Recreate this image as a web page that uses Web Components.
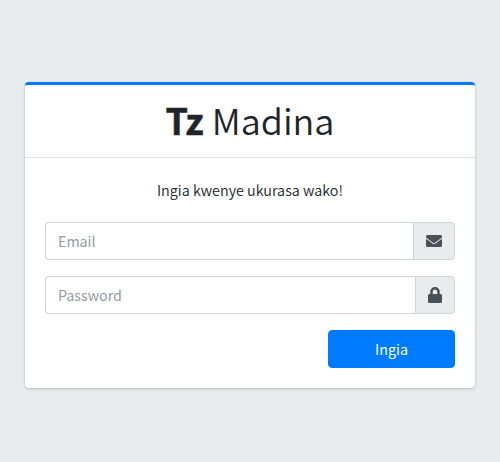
<!DOCTYPE html>
<html lang="sw">
<head>
<meta charset="utf-8">
<title>Tz Madina</title>
<style>
html,body{height:100%}
body{margin:0;background:#e9ecef;color:#212529;font-family:"Noto Sans CJK SC","Open Sans",sans-serif;font-size:14.25px;line-height:24px;overflow:hidden}
</style>
</head>
<body>
<login-page>
  <login-card>
    <brand-title slot="header"><b>Tz</b> <span>Madina</span></brand-title>
    <login-form message="Ingia kwenye ukurasa wako!">
      <input-field type="email" label="Email"><app-icon name="envelope"></app-icon></input-field>
      <input-field type="password" label="Password"><app-icon name="lock"></app-icon></input-field>
      <primary-button slot="action">Ingia</primary-button>
    </login-form>
  </login-card>
</login-page>
<script>
const define = (name, html, setup) => customElements.define(name, class extends HTMLElement {
  constructor() {
    super();
    this.attachShadow({ mode: 'open' }).innerHTML = html;
  }
  connectedCallback() { if (setup) setup(this, this.shadowRoot); }
});

define('login-page', `<style>
:host{display:flex;justify-content:center;align-items:flex-start;box-sizing:border-box;height:100vh;padding-top:82px;background:#e9ecef}
::slotted(login-card){width:90%}
</style><slot></slot>`);

define('login-card', `<style>
:host{display:block;box-sizing:border-box;height:306px;background:#fff;border-top:3px solid #007bff;border-radius:4px;box-shadow:0 0 1px rgba(0,0,0,.125),0 1px 3px rgba(0,0,0,.2)}
header{box-sizing:border-box;height:73px;padding:10px 20px;border-bottom:1px solid rgba(0,0,0,.125);text-align:center}
main{padding:20px}
</style><header><slot name="header"></slot></header><main><slot></slot></main>`);

define('brand-title', `<style>
:host{display:block;font-size:36px;line-height:48px;font-weight:350;white-space:nowrap}
::slotted(b){font-weight:700;-webkit-text-stroke:.5px currentColor}
</style><slot></slot>`);

define('login-form', `<style>
:host{display:block}
p{margin:0 0 20px;font-size:14.4px;font-weight:350;text-align:center;white-space:nowrap}
.fields{display:flex;flex-direction:column;gap:16px}
.actions{display:flex;justify-content:flex-end;margin-top:16px}
</style><p></p><div class="fields"><slot></slot></div><div class="actions"><slot name="action"></slot></div>`,
(el, root) => { root.querySelector('p').textContent = el.getAttribute('message'); });

define('input-field', `<style>
:host{display:flex;height:38px}
input{flex:1;min-width:0;box-sizing:border-box;margin:0;padding:6px 12px;border:1px solid #ced4da;border-right:0;border-radius:4px 0 0 4px;background:#fff;color:#495057;font:inherit;outline:0}
input::placeholder{color:#939ba2;opacity:1}
span{display:flex;align-items:center;box-sizing:border-box;padding:0 12px;border:1px solid #ced4da;border-radius:0 4px 4px 0;background:#e9ecef;color:#495057}
</style><input><span><slot></slot></span>`,
(el, root) => {
  const input = root.querySelector('input');
  input.type = el.getAttribute('type');
  input.placeholder = el.getAttribute('label');
});

const icons = {
  envelope: [512, 'M502.3 190.8c3.9-3.1 9.7-.2 9.7 4.7V400c0 26.5-21.5 48-48 48H48c-26.500 0-48-21.500-48-48V195.600c0-5 5.700-7.800 9.700-4.700 22.400 17.400 52.100 39.500 154.100 113.600 21.100 15.400 56.700 47.800 92.200 47.600 35.700.3 72-32.800 92.300-47.600 102-74.100 131.600-96.300 154-113.700zM256 320c23.200.4 56.600-29.200 73.400-41.400 132.700-96.300 142.800-104.700 173.400-128.700 5.800-4.500 9.200-11.500 9.200-18.900v-19c0-26.500-21.500-48-48-48H48c-26.500 0-48 21.500-48 48v19c0 7.400 3.400 14.300 9.200 18.900 30.600 23.900 40.700 32.400 173.400 128.700 16.800 12.200 50.200 41.800 73.400 41.400z'],
  lock: [448, 'M400 224h-24v-72C376 68.200 307.800 0 224 0S72 68.200 72 152v72H48c-26.500 0-48 21.500-48 48v192c0 26.500 21.500 48 48 48h352c26.500 0 48-21.500 48-48V272c0-26.500-21.500-48-48-48zm-104 0H152v-72c0-39.700 32.300-72 72-72s72 32.300 72 72v72z']
};
define('app-icon', `<style>
:host{display:block}
svg{display:block;height:16px;fill:currentColor}
</style><svg aria-hidden="true"><path/></svg>`,
(el, root) => {
  const [width, path] = icons[el.getAttribute('name')];
  const svg = root.querySelector('svg');
  svg.setAttribute('viewBox', `0 0 ${width} 512`);
  svg.style.width = width / 32 + 'px';
  svg.firstChild.setAttribute('d', path);
});

define('primary-button', `<style>
:host{display:block;width:127px}
button{display:block;box-sizing:border-box;width:100%;height:38px;margin:0;padding:6px 12px;border:1px solid #007bff;border-radius:4px;background:#007bff;color:#fff;font:inherit}
</style><button type="button"><slot></slot></button>`);
</script>
</body>
</html>
